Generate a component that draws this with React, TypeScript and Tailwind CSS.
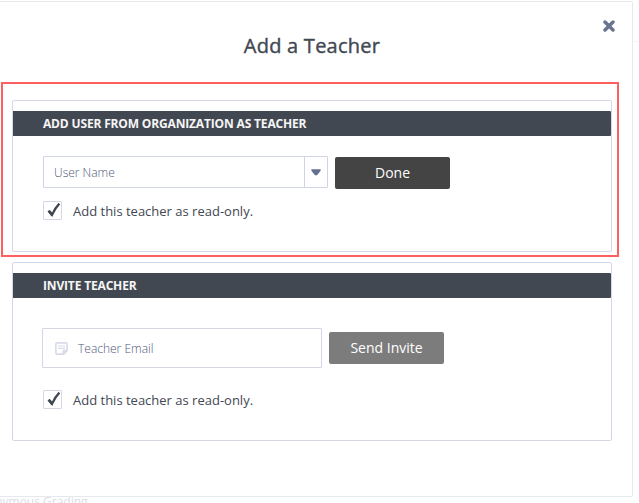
import type { ReactNode } from "react";

function Panel({ title, className, children }: { title: string; className: string; children: ReactNode }) {
  return (
    <section className={`w-[600px] shrink-0 rounded-[2px] border border-[#d5d7e6] pt-[10px] ${className}`}>
      <h2 className="h-[25px] rounded-r-[1px] bg-[#424851] pl-[30px] text-[12px] leading-[25px] font-bold tracking-[-0.16px] whitespace-nowrap text-[#f6f6f7]">
        {title}
      </h2>
      {children}
    </section>
  );
}

function ReadOnlyCheckbox() {
  return (
    <label className="flex h-[19px] items-center gap-[11px] text-[13px] text-[#424851]">
      <span className="flex size-[19px] shrink-0 rounded-[1px] border border-[#d5d7e6]">
        <svg width="17" height="17" viewBox="0 0 17 17" fill="none">
          <path d="M4.4 8.8L8 12.9Q10.8 6.2 15.4 1.6" stroke="#424851" strokeWidth="2.3" />
          <path d="M3.9 9.4L5.9 8L8.8 11.4L8.6 14H7.2Z" fill="#424851" />
        </svg>
      </span>
      <span className="pt-[2px] leading-[19px] whitespace-nowrap">Add this teacher as read-only.</span>
    </label>
  );
}

export default function App() {
  return (
    <div className="relative h-[503px] w-[639px] overflow-hidden bg-white pt-px font-['Open_Sans','Noto_Sans',sans-serif]">
      <span className="absolute top-[41px] left-[633px] h-px w-[6px] bg-[#f5f5f7]" />
      <main className="relative -ml-2 flex h-[496px] w-[641px] flex-col rounded-[2px] border border-[#e8e9ef] pl-[19px]">
        <button aria-label="Close" className="absolute top-[18px] right-[17px] size-[12px]">
          <svg width="12" height="12" viewBox="0 0 12 12">
            <path d="M2 2L10 10M10 2L2 10" stroke="#69748f" strokeWidth="3.5" strokeLinecap="round" />
          </svg>
        </button>
        <h1 className="mt-[30px] mr-[20px] h-[28px] text-center text-[20px] leading-[28px] font-normal tracking-[0.25px] text-[#424851] [-webkit-text-stroke:0.4px_#424851]">Add a Teacher</h1>

        <Panel title="ADD USER FROM ORGANIZATION AS TEACHER" className="mt-[40px] h-[152px]">
          <div className="mt-[20px] ml-[30px] flex items-start gap-[7px]">
            <div className="flex h-[32px] w-[285px] rounded-[1px] border border-[#d0d5e6] text-[12px] font-light text-[#4d587c]">
              <span className="flex-1 pl-[10px] leading-[32px]">User Name</span>
              <span className="flex w-[23px] items-center justify-center border-l border-[#d0d5e6]">
                <svg width="10" height="7" viewBox="0 0 10 7"><path d="M.4 .3H9.6V1.8L6 6.3H4L.4 1.8Z" fill="#64708f" /></svg>
              </span>
            </div>
            <button className="mt-px h-[32px] w-[115px] rounded-[2px] bg-[#444444] text-[14px] leading-[32px] text-white">Done</button>
          </div>
          <div className="mt-[12px] ml-[30px]"><ReadOnlyCheckbox /></div>
        </Panel>

        <Panel title="INVITE TEACHER" className="mt-[10px] h-[179px]">
          <div className="mt-[30px] ml-[29px] flex items-center gap-[7px]">
            <div className="flex h-[40px] w-[280px] items-center gap-[10px] rounded-[1px] border border-[#d5d7e6] pl-[12px] text-[12px] font-light text-[#4d587c]">
              <svg width="13" height="13" viewBox="0 0 13 13" fill="none" stroke="#d7dae8">
                <path d="M2 .9H11Q12.1 .9 12.1 2V8.7L8.7 12.1H2Q.9 12.1 .9 11V2Q.9 .9 2 .9Z" strokeWidth="1.6" />
                <path d="M3 4H10M3 6.4H10" strokeWidth="1.2" />
                <path d="M8 12V8.2H12Z" fill="#d7dae8" />
              </svg>
              <span className="pt-[2px]">Teacher Email</span>
            </div>
            <button className="h-[32px] w-[115px] rounded-[2px] bg-[#7c7c7c] text-[14px] leading-[32px] text-white">Send Invite</button>
          </div>
          <div className="mt-[22px] ml-[30px]"><ReadOnlyCheckbox /></div>
        </Panel>
      </main>
      <div className="-ml-[27px] h-[6px] overflow-hidden text-[12px] whitespace-nowrap text-[#dcdde5]">
        <span className="block -mt-[3px] leading-[16px]">Anonymous Grading</span>
      </div>
      <div className="pointer-events-none absolute top-[82px] left-px h-[175px] w-[618px] border-2 border-[#ff5f5f]" />
    </div>
  );
}
